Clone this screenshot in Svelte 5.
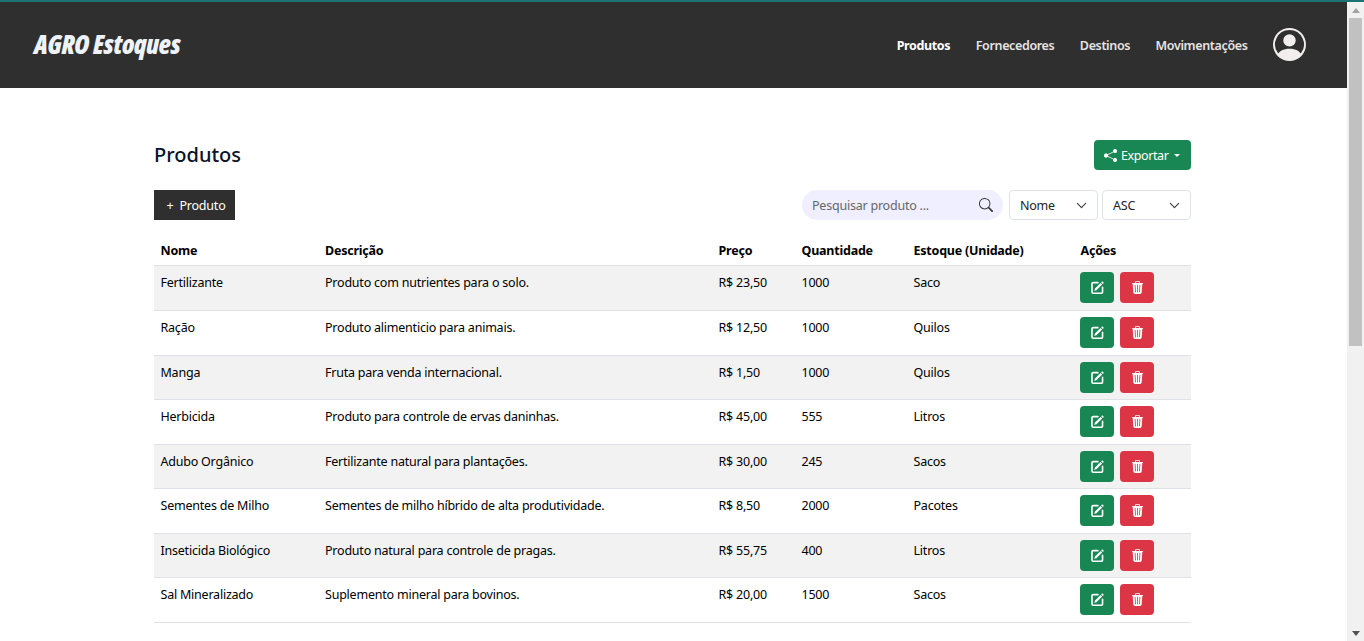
<script>
  const produtos = [
    { nome: 'Fertilizante', descricao: 'Produto com nutrientes para o solo.', preco: 'R$ 23,50', qtd: 1000, unidade: 'Saco' },
    { nome: 'Ração', descricao: 'Produto alimenticio para animais.', preco: 'R$ 12,50', qtd: 1000, unidade: 'Quilos' },
    { nome: 'Manga', descricao: 'Fruta para venda internacional.', preco: 'R$ 1,50', qtd: 1000, unidade: 'Quilos' },
    { nome: 'Herbicida', descricao: 'Produto para controle de ervas daninhas.', preco: 'R$ 45,00', qtd: 555, unidade: 'Litros' },
    { nome: 'Adubo Orgânico', descricao: 'Fertilizante natural para plantações.', preco: 'R$ 30,00', qtd: 245, unidade: 'Sacos' },
    { nome: 'Sementes de Milho', descricao: 'Sementes de milho híbrido de alta produtividade.', preco: 'R$ 8,50', qtd: 2000, unidade: 'Pacotes' },
    { nome: 'Inseticida Biológico', descricao: 'Produto natural para controle de pragas.', preco: 'R$ 55,75', qtd: 400, unidade: 'Litros' },
    { nome: 'Sal Mineralizado', descricao: 'Suplemento mineral para bovinos.', preco: 'R$ 20,00', qtd: 1500, unidade: 'Sacos' }
  ];

  const links = ['Produtos', 'Fornecedores', 'Destinos', 'Movimentações'];
</script>

<div class="topline"></div>
<div class="window">
  <div class="page">
    <header class="navbar">
      <span class="brand">AGRO Estoques</span>
      <nav class="links">
        {#each links as link, i}
          <a href="#top" class:active={i === 0}>{link}</a>
        {/each}
        <svg class="avatar" viewBox="0 0 16 16" fill="currentColor">
          <path d="M11 6a3 3 0 1 1-6 0 3 3 0 0 1 6 0" />
          <path fill-rule="evenodd" d="M0 8a8 8 0 1 1 16 0A8 8 0 0 1 0 8m8-7a7 7 0 0 0-5.468 11.37C3.242 11.226 4.805 10 8 10s4.757 1.225 5.468 2.37A7 7 0 0 0 8 1" />
        </svg>
      </nav>
    </header>

    <main class="content">
      <div class="title-row">
        <h1>Produtos</h1>
        <button class="export">
          <svg viewBox="0 0 16 16" fill="currentColor">
            <path d="M11 2.5a2.5 2.5 0 1 1 .603 1.628l-6.718 3.12a2.499 2.499 0 0 1 0 1.504l6.718 3.12a2.5 2.5 0 1 1-.488.876l-6.718-3.12a2.5 2.5 0 1 1 0-3.256l6.718-3.12A2.5 2.5 0 0 1 11 2.5" />
          </svg>
          Exportar
          <span class="caret"></span>
        </button>
      </div>

      <div class="tools-row">
        <button class="add">+&nbsp; Produto</button>
        <div class="filters">
          <div class="search">
            <span>Pesquisar produto ...</span>
            <svg viewBox="0 0 16 16" fill="currentColor">
              <path d="M11.742 10.344a6.5 6.5 0 1 0-1.397 1.398h-.001c.03.04.062.078.098.115l3.85 3.85a1 1 0 0 0 1.415-1.414l-3.85-3.85a1.007 1.007 0 0 0-.115-.1zM12 6.5a5.5 5.5 0 1 1-11 0 5.5 5.5 0 0 1 11 0" />
            </svg>
          </div>
          <div class="select">Nome
            <svg viewBox="0 0 16 16" fill="none" stroke="currentColor" stroke-width="1.6" stroke-linecap="round" stroke-linejoin="round"><path d="m2 5 6 6 6-6" /></svg>
          </div>
          <div class="select">ASC
            <svg viewBox="0 0 16 16" fill="none" stroke="currentColor" stroke-width="1.6" stroke-linecap="round" stroke-linejoin="round"><path d="m2 5 6 6 6-6" /></svg>
          </div>
        </div>
      </div>

      <table>
        <colgroup>
          <col style="width:164.5px" />
          <col style="width:393.5px" />
          <col style="width:83px" />
          <col style="width:112px" />
          <col style="width:167px" />
          <col style="width:117px" />
        </colgroup>
        <thead>
          <tr>
            <th>Nome</th>
            <th>Descrição</th>
            <th>Preço</th>
            <th>Quantidade</th>
            <th>Estoque (Unidade)</th>
            <th>Ações</th>
          </tr>
        </thead>
        <tbody>
          {#each produtos as p}
            <tr>
              <td>{p.nome}</td>
              <td>{p.descricao}</td>
              <td>{p.preco}</td>
              <td>{p.qtd}</td>
              <td>{p.unidade}</td>
              <td>
                <div class="acoes">
                  <button class="icon edit" aria-label="Editar">
                    <svg viewBox="0 0 16 16">
                      <path fill="currentColor" d="M15.502 1.94a.5.5 0 0 1 0 .706L14.459 3.69l-2-2L13.502.646a.5.5 0 0 1 .707 0l1.293 1.293zm-1.75 2.456-2-2L4.939 9.21a.5.5 0 0 0-.121.196l-.805 2.414a.25.25 0 0 0 .316.316l2.414-.805a.5.5 0 0 0 .196-.12l6.813-6.814z" />
                      <path fill="none" stroke="currentColor" stroke-width="2" stroke-linecap="round" d="M8.5 2H2.7A1.5 1.5 0 0 0 1.2 3.5v10A1.5 1.5 0 0 0 2.7 15h10a1.5 1.5 0 0 0 1.5-1.5V7.8" />
                    </svg>
                  </button>
                  <button class="icon remove" aria-label="Excluir">
                    <svg viewBox="0 0 16 16" fill="currentColor">
                      <path d="M11 1.5v1h3.5a.5.5 0 0 1 0 1h-.538l-.853 10.66A2 2 0 0 1 11.115 16h-6.23a2 2 0 0 1-1.994-1.84L2.038 3.5H1.5a.5.5 0 0 1 0-1H5v-1A1.5 1.5 0 0 1 6.5 0h3A1.5 1.5 0 0 1 11 1.5m-5 0v1h4v-1a.5.5 0 0 0-.5-.5h-3a.5.5 0 0 0-.5.5M4.5 5.029l.5 8.5a.5.5 0 1 0 .998-.06l-.5-8.5a.5.5 0 1 0-.998.06m6.53-.528a.5.5 0 0 0-.528.47l-.5 8.5a.5.5 0 0 0 .998.058l.5-8.5a.5.5 0 0 0-.47-.528M8 4.5a.5.5 0 0 0-.5.5v8.5a.5.5 0 0 0 1 0V5a.5.5 0 0 0-.5-.5" />
                    </svg>
                  </button>
                </div>
              </td>
            </tr>
          {/each}
        </tbody>
      </table>
    </main>
  </div>

  <!-- the page is cut at the window height, so the bar is drawn by hand -->
  <aside class="scrollbar">
    <span class="arrow up"></span>
    <span class="thumb"></span>
    <span class="track"></span>
    <span class="arrow down"></span>
  </aside>
</div>

<style>
  :global(body) {
    overflow: hidden;
    font-family: "Noto Sans", "Open Sans", sans-serif;
    font-size: 12.5px;
    letter-spacing: -0.22px;
    color: #000;
    background: #fff;
  }

  .topline {
    height: 2px;
    background: #1b7373;
  }

  .window {
    display: flex;
    height: calc(100vh - 2px);
  }

  .page {
    flex: 1;
    min-width: 0;
    overflow: hidden;
  }

  .scrollbar {
    width: 17px;
    display: flex;
    flex-direction: column;
    background: #f1f1f1;
  }

  .arrow {
    height: 16px;
    display: flex;
    align-items: center;
    justify-content: center;
  }

  .arrow::before {
    content: "";
    border-left: 4.5px solid transparent;
    border-right: 4.5px solid transparent;
  }

  .arrow.up::before {
    border-bottom: 5px solid #a3a3a3;
  }

  .arrow.down::before {
    border-top: 5px solid #505050;
  }

  .thumb {
    height: 328px;
    margin: 0 2px;
    background: #c1c1c1;
  }

  .track {
    flex: 1;
  }

  .navbar {
    height: 86px;
    background: #2f2f2f;
    display: flex;
    align-items: center;
    justify-content: space-between;
    padding: 0 41px 0 34px;
  }

  .brand {
    font-family: "Open Sans", sans-serif;
    font-stretch: 75%;
    font-weight: 800;
    font-style: italic;
    font-size: 26px;
    letter-spacing: -0.32px;
    color: #eef3fa;
    margin-top: -3px;
  }

  .links {
    display: flex;
    align-items: center;
    gap: 25.5px;
  }

  .links a {
    color: #e6e4e4;
    text-decoration: none;
    font-weight: 600;
    letter-spacing: -0.36px;
  }

  .links a.active {
    color: #fff;
    font-weight: 700;
  }

  .avatar {
    width: 33px;
    height: 33px;
    color: #f3eeee;
    margin-top: -1px;
  }

  .content {
    width: 1037px;
    margin-left: 154px;
    padding-top: 52px;
  }

  .title-row {
    display: flex;
    justify-content: space-between;
    align-items: center;
    height: 30px;
  }

  h1 {
    margin: -2px 0 0;
    font-size: 20px;
    font-weight: 500;
    letter-spacing: 0;
    color: #07142b;
  }

  button {
    font-family: inherit;
    font-size: inherit;
    letter-spacing: inherit;
    border: none;
    cursor: pointer;
  }

  .export {
    display: flex;
    align-items: center;
    width: 97px;
    height: 30px;
    padding: 0 0 0 10px;
    gap: 4px;
    background: #198754;
    color: #fff;
    border-radius: 4px;
    letter-spacing: -0.4px;
  }

  .export svg {
    width: 13px;
    height: 13px;
  }

  .caret {
    margin-left: 2px;
    border-top: 3.5px solid #fff;
    border-left: 3.5px solid transparent;
    border-right: 3.5px solid transparent;
  }

  .tools-row {
    display: flex;
    justify-content: space-between;
    margin-top: 20px;
    height: 30px;
  }

  .add {
    width: 81px;
    height: 30px;
    background: #2f2f2f;
    color: #fff;
    padding: 0 0 0 3px;
  }

  .filters {
    display: flex;
    gap: 4px;
  }

  .search {
    width: 201px;
    box-sizing: border-box;
    padding: 0 10px;
    margin-right: 2px;
    background: #f0efff;
    border-radius: 15px;
    display: flex;
    align-items: center;
    justify-content: space-between;
    color: #666;
  }

  .search svg {
    width: 14px;
    height: 14px;
    color: #333;
  }

  .select {
    box-sizing: border-box;
    width: 89px;
    height: 30px;
    padding: 0 10px;
    display: flex;
    align-items: center;
    justify-content: space-between;
    border: 1px solid #dee2e6;
    border-radius: 4px;
    color: #212529;
  }

  .select svg {
    width: 11px;
    height: 11px;
    color: #343a40;
  }

  table {
    table-layout: fixed;
    width: 100%;
    border-collapse: collapse;
    margin-top: 15px;
  }

  th, td {
    text-align: left;
    vertical-align: top;
    padding: 7px 6.5px 5.5px;
    border-bottom: 1px solid #dee2e6;
    line-height: 20px;
  }

  th {
    font-weight: 700;
    padding: 6px 6.5px 4.4px;
  }

  td:last-child {
    padding: 6px 6px 6.57px;
  }

  tbody tr:nth-child(odd) td {
    background: #f2f2f2;
  }

  .acoes {
    display: flex;
    gap: 6px;
  }

  .icon {
    width: 34px;
    height: 31px;
    border-radius: 4px;
    padding: 0;
    color: #fff;
    display: flex;
    align-items: center;
    justify-content: center;
  }

  .icon svg {
    width: 13px;
    height: 13px;
  }

  .edit { background: #198754; }
  .remove { background: #dc3545; }
</style>
